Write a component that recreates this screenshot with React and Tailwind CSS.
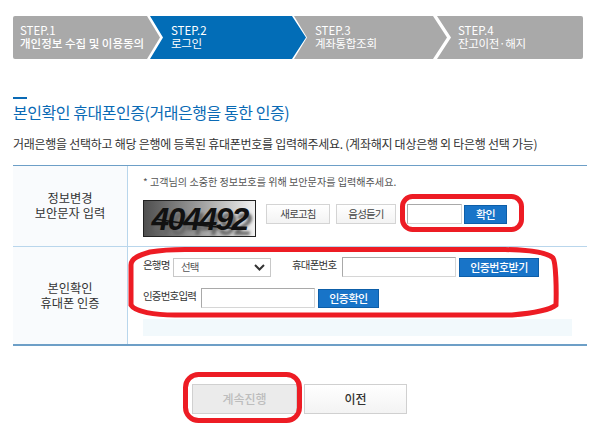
const FONT = "font-['Noto_Sans_CJK_KR','Noto_Sans',sans-serif]";

const steps = [
  { no: "STEP.1", name: "개인정보 수집 및 이용동의", cls: "w-[147px] bg-[#a9a9a9] rounded-l-[2px] pl-[7px] [clip-path:polygon(0_0,134px_0,100%_50%,134px_100%,0_100%)]", bold: true },
  { no: "STEP.2", name: "로그인", cls: "w-[156px] -ml-[10px] bg-[#026db7] pl-[21px] [clip-path:polygon(0_0,142px_0,100%_50%,142px_100%,0_100%,13px_50%)]" },
  { no: "STEP.3", name: "계좌통합조회", cls: "w-[153px] -ml-[12px] bg-[#a9a9a9] pl-[21px] [clip-path:polygon(0_0,139px_0,100%_50%,139px_100%,0_100%,13px_50%)]" },
  { no: "STEP.4", name: "잔고이전·해지", cls: "flex-1 -ml-[10px] bg-[#a9a9a9] rounded-r-[2px] pl-[21px] [clip-path:polygon(0_0,100%_0,100%_100%,0_100%,14px_50%)]" },
];

function Step({ no, name, cls, bold }) {
  return (
    <div className={`h-[43px] shrink-0 pt-[8px] text-[11.5px] leading-[13px] text-white ${cls}`}>
      <div className="font-normal">{no}</div>
      <div className={`whitespace-nowrap ${bold ? "font-medium" : "font-normal tracking-[-0.3px]"}`}>{name}</div>
    </div>
  );
}

function BlueBtn({ children, className = "" }) {
  return (
    <button className={`h-[19px] shrink-0 border border-[#0d5ea8] bg-[#1874c8] text-[11px] leading-none font-medium tracking-[-0.5px] text-white ${className}`}>
      {children}
    </button>
  );
}

function GreyBtn({ children, className = "" }) {
  return (
    <button className={`h-[20px] shrink-0 border border-[#d4d4d4] bg-gradient-to-b from-white to-[#f3f3f3] text-[10.5px] leading-none tracking-[-0.8px] text-[#444] ${className}`}>
      {children}
    </button>
  );
}

function TextInput({ className = "" }) {
  return <input className={`h-[20px] shrink-0 border border-[#d6d6d6] border-t-[#a9a9a9] border-l-[#a9a9a9] bg-white ${className}`} />;
}

function HeadCell({ lines }) {
  return (
    <div className="flex w-[115px] shrink-0 flex-col items-center justify-center border-r border-[#b9d6ec] bg-[#f9fbfd] text-[12.25px] leading-[15px] text-[#333]">
      {lines.map((l) => (
        <div key={l}>{l}</div>
      ))}
    </div>
  );
}

// 손으로 그린 빨간 표시
function RedMarks() {
  return (
    <svg className="pointer-events-none absolute left-0 top-0" width="606" height="426" fill="none" stroke="#ed1c24" strokeWidth="5">
      <rect x="402.5" y="196.5" width="119" height="33" rx="10" />
      <path d="M131 305 L131 265 C131 258 140 255 150 252 C165 249.5 175 249.5 185 249.5 L505 249.5 C530 250 548 253 553 258 C556 262 556.5 290 556 305 C550 310 535 313 512 315 L175 315 C155 315 135 312 131 305 Z" />
      <rect x="185.5" y="374.5" width="114" height="46" rx="13" />
    </svg>
  );
}

export default function App() {
  return (
    <div className={`relative h-[426px] w-[606px] overflow-hidden bg-white pl-[13px] pt-[16px] ${FONT}`}>
      <div className="flex w-[570px]">
        {steps.map((s) => (
          <Step key={s.no} {...s} />
        ))}
      </div>

      <div className="mt-[38px] h-[2px] w-[14px] bg-[#0a6ab5]" />
      <h2 className="mt-[2px] text-[16px] leading-[22px] font-normal tracking-[-0.45px] text-[#0a6ab5]">
        본인확인 휴대폰인증(거래은행을 통한 인증)
      </h2>
      <p className="mt-[13px] text-[12px] leading-[16px] tracking-[-0.27px] whitespace-nowrap text-[#333]">
        거래은행을 선택하고 해당 은행에 등록된 휴대폰번호를 입력해주세요. (계좌해지 대상은행 외 타은행 선택 가능)
      </p>

      <div className="mt-[13px] w-[574px] border-t border-b-2 border-t-[#6d9fc7] border-b-[#6d9fc7]">
        <div className="flex h-[81px] border-b border-[#b9d6ec]">
          <HeadCell lines={["정보변경", "보안문자 입력"]} />
          <div className="pl-[15px] pt-[9px]">
            <div className="text-[10.1px] leading-[14px] text-[#555]">* 고객님의 소중한 정보보호를 위해 보안문자를 입력해주세요.</div>
            <div className="mt-[11px] flex items-start">
              <div className="relative flex h-[37px] w-[113px] items-center justify-center overflow-hidden border border-[#222] bg-gradient-to-r from-[#505050] to-[#f2f2f2] font-['Liberation_Sans',sans-serif] text-[32px] font-bold tracking-[-1.8px] text-[#111] italic [text-shadow:3px_5px_3px_#666]">
                404492
                <svg className="absolute left-0 top-0" width="111" height="35" fill="none" stroke="#111" strokeWidth="1.5">
                  <path d="M11 18 C35 22 70 26 98 28" />
                </svg>
              </div>
              <GreyBtn className="ml-[10px] mt-[4px] w-[64px]">새로고침</GreyBtn>
              <GreyBtn className="ml-[6px] mt-[4px] w-[60px]">음성듣기</GreyBtn>
              <TextInput className="ml-[11px] mt-[4px] w-[55px]" />
              <BlueBtn className="ml-[2px] mt-[5px] w-[43px]">확인</BlueBtn>
            </div>
          </div>
        </div>

        <div className="flex h-[97px]">
          <HeadCell lines={["본인확인", "휴대폰 인증"]} />
          <div className="pl-[15px] pt-[10px]">
            <div className="flex items-center text-[10.5px] tracking-[-0.8px] text-[#333]">
              <span className="mb-[4px] w-[30px]">은행명</span>
              <div className="flex h-[19px] w-[98px] items-center justify-between border border-[#c8c8c8] bg-white pl-[7px] pr-[5px] text-[#555]">
                <span>선택</span>
                <svg width="11" height="7" viewBox="0 0 11 7" fill="none" stroke="#333" strokeWidth="2">
                  <path d="M1 1l4.5 4.5L10 1" />
                </svg>
              </div>
              <span className="mb-[4px] ml-[21px] w-[50px] whitespace-nowrap">휴대폰번호</span>
              <TextInput className="w-[114px]" />
              <BlueBtn className="ml-[3px] w-[80px]">인증번호받기</BlueBtn>
            </div>
            <div className="mt-[11px] flex items-center text-[10.5px] tracking-[-0.8px] text-[#333]">
              <span className="mb-[4px] w-[58px] whitespace-nowrap">인증번호입력</span>
              <TextInput className="w-[114px]" />
              <BlueBtn className="ml-[3px] w-[61px]">인증확인</BlueBtn>
            </div>
            <div className="mt-[11px] h-[17px] w-[429px] bg-[#f2f9fc]" />
          </div>
        </div>
      </div>

      <div className="mt-[38px] ml-[179px] flex gap-[7px]">
        <button className="h-[30px] w-[105px] border border-[#d0d0d0] bg-[#ebebeb] text-[12px] font-medium text-[#bdbdbd]">계속진행</button>
        <button className="h-[30px] w-[103px] border border-[#d0d0d0] bg-gradient-to-b from-white to-[#f3f3f3] text-[12px] font-medium text-[#333]">이전</button>
      </div>

      <RedMarks />
    </div>
  );
}
